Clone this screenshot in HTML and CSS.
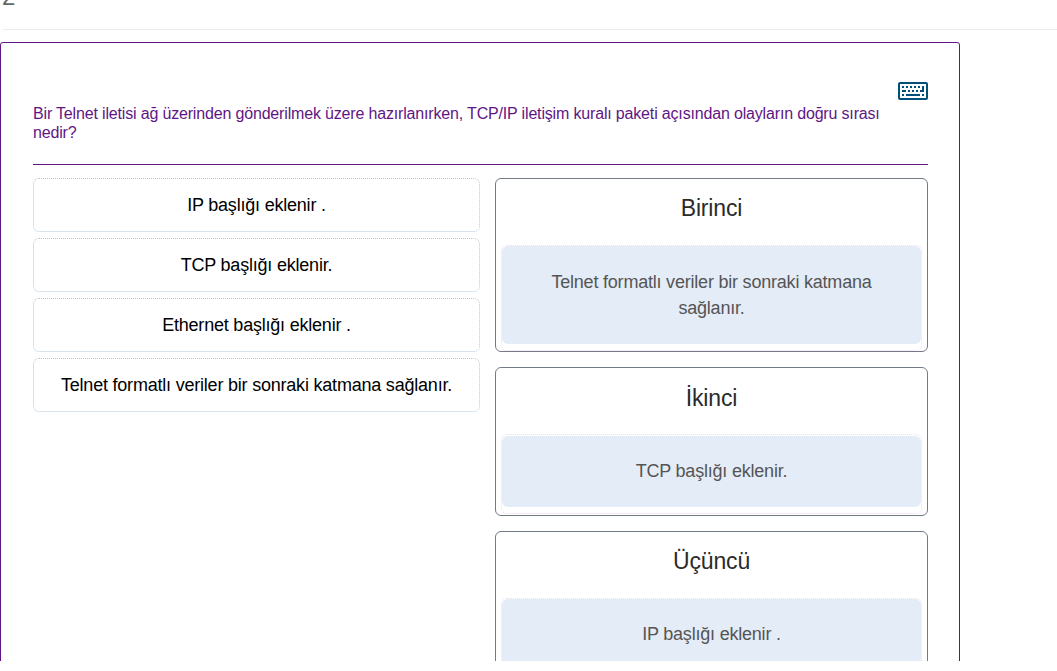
FILE: index.html
```html
<!DOCTYPE html>
<html lang="tr">
<head>
<meta charset="utf-8">
<title>Soru 2</title>
<link rel="stylesheet" href="styles.css">
</head>
<body>
<main class="page">
  <header class="page-header"><span class="number">2</span></header>
  <section class="question-card">
    <div class="toolbar">
      <svg class="keyboard" width="30" height="18" viewBox="0 0 30 18" shape-rendering="crispEdges" aria-label="Klavye">
        <rect x="1" y="1" width="28" height="16" rx="1" fill="none" stroke="#00507a" stroke-width="2" shape-rendering="auto"/>
        <path fill="#00507a" d="M4 4h2v2H4zM8 4h2v2H8zM12 4h2v2h-2zM16 4h2v2h-2zM20 4h2v2h-2zM24 4h2v6h-4V8h2zM4 8h4v2H4zM10 8h2v2h-2zM14 8h2v2h-2zM18 8h2v2h-2zM4 12h2v2H4zM8 12h14v2H8zM24 12h2v2h-2z"/>
      </svg>
    </div>
    <p class="question"><span class="question-line">Bir Telnet iletisi ağ üzerinden gönderilmek üzere hazırlanırken, TCP/IP iletişim kuralı paketi açısından olayların doğru sırası</span> nedir?</p>
    <div class="matching">
      <div class="options">
        <div class="option"><span>IP başlığı eklenir .</span></div>
        <div class="option"><span>TCP başlığı eklenir.</span></div>
        <div class="option"><span>Ethernet başlığı eklenir .</span></div>
        <div class="option"><span>Telnet formatlı veriler bir sonraki katmana sağlanır.</span></div>
      </div>
      <div class="targets">
        <div class="target target-first">
          <h2>Birinci</h2>
          <div class="dropzone"><div class="answer"><span>Telnet formatlı veriler bir sonraki katmana<br>sağlanır.</span></div></div>
        </div>
        <div class="target target-second">
          <h2>İkinci</h2>
          <div class="dropzone"><div class="answer"><span>TCP başlığı eklenir.</span></div></div>
        </div>
        <div class="target target-third">
          <h2>Üçüncü</h2>
          <div class="dropzone"><div class="answer"><span>IP başlığı eklenir .</span></div></div>
        </div>
      </div>
    </div>
  </section>
</main>
</body>
</html>
```
FILE: styles.css
```css
* { box-sizing: border-box; }
body {
  margin: 0;
  background: #fff;
  font-family: "Liberation Sans", Arial, sans-serif;
  overflow: hidden;
}
.page { height: 661px; overflow: hidden; }
.page-header {
  display: flex;
  height: 30px;
  margin-left: 3px;
  border-bottom: 1px solid #ebebeb;
}
.number {
  height: 30px;
  margin-top: -18px;
  margin-left: -1px;
  font-size: 24px;
  line-height: 30px;
  color: #666;
}
.question-card {
  width: 960px;
  height: 700px;
  margin-top: 12px;
  padding: 39px 31px 0 32px;
  border: 1px solid #5f1685;
  border-radius: 3px;
}
.toolbar { display: flex; justify-content: flex-end; height: 22px; }
.keyboard { display: block; }
.question {
  height: 61px;
  margin: 0;
  border-bottom: 1px solid #5f1685;
  font-size: 16px;
  line-height: 19px;
  letter-spacing: -0.168px;
  color: #5f1685;
}
.question-line { display: block; white-space: nowrap; }
.matching { display: flex; gap: 15px; margin-top: 13px; }
.options { display: flex; flex-direction: column; gap: 6px; width: 447px; }
.option {
  display: flex;
  align-items: center;
  justify-content: center;
  height: 54px;
  border: 1px dotted #b4c5d6;
  border-radius: 6px;
  font-size: 18px;
  letter-spacing: -0.21px;
  color: #000;
}
.targets { display: flex; flex-direction: column; gap: 15px; width: 433px; }
.target {
  display: flex;
  flex-direction: column;
  padding: 0 5px;
  border: 1px solid #737b87;
  border-radius: 6px;
}
.target-first { height: 174px; }
.target-second { height: 149px; }
.target-third { height: 180px; }
.target h2 {
  height: 66px;
  margin: 0;
  font-size: 23px;
  line-height: 58px;
  font-weight: 400;
  letter-spacing: -0.15px;
  text-align: center;
  color: #2b2b2b;
}
.target-second h2 { line-height: 60px; }
.dropzone {
  height: 106px;
  border: 1px dotted #f0d8f7;
  border-radius: 6px;
}
.target-second .dropzone { height: 80px; padding-top: 1px; }
.target-third .dropzone { height: 90px; }
.answer {
  display: flex;
  align-items: center;
  justify-content: center;
  height: 98px;
  border-radius: 6px;
  background: #e4ecf7;
  font-size: 18px;
  line-height: 26px;
  letter-spacing: -0.21px;
  text-align: center;
  color: #555;
}
.target-second .answer, .target-third .answer { height: 71px; padding-bottom: 2px; }
```
